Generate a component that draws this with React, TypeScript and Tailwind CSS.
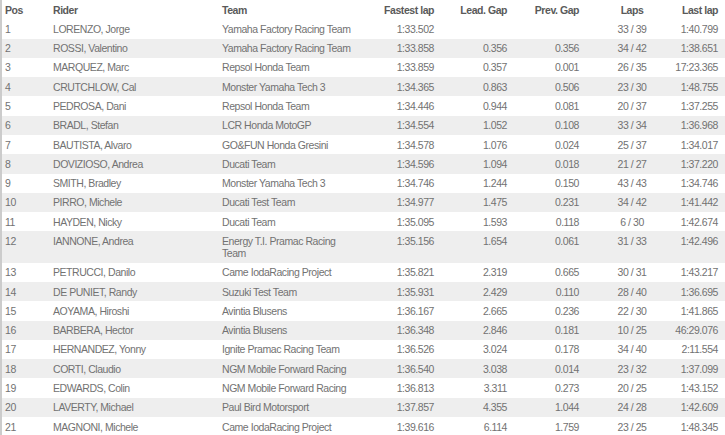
// Standings table: fastest laps per rider
const rows: [string, string, string, string, string, string, string, string][] = [
  ["1", "LORENZO, Jorge", "Yamaha Factory Racing Team", "1:33.502", "", "", "33 / 39", "1:40.799"],
  ["2", "ROSSI, Valentino", "Yamaha Factory Racing Team", "1:33.858", "0.356", "0.356", "34 / 42", "1:38.651"],
  ["3", "MARQUEZ, Marc", "Repsol Honda Team", "1:33.859", "0.357", "0.001", "26 / 35", "17:23.365"],
  ["4", "CRUTCHLOW, Cal", "Monster Yamaha Tech 3", "1:34.365", "0.863", "0.506", "23 / 30", "1:48.755"],
  ["5", "PEDROSA, Dani", "Repsol Honda Team", "1:34.446", "0.944", "0.081", "20 / 37", "1:37.255"],
  ["6", "BRADL, Stefan", "LCR Honda MotoGP", "1:34.554", "1.052", "0.108", "33 / 34", "1:36.968"],
  ["7", "BAUTISTA, Alvaro", "GO&FUN Honda Gresini", "1:34.578", "1.076", "0.024", "25 / 37", "1:34.017"],
  ["8", "DOVIZIOSO, Andrea", "Ducati Team", "1:34.596", "1.094", "0.018", "21 / 27", "1:37.220"],
  ["9", "SMITH, Bradley", "Monster Yamaha Tech 3", "1:34.746", "1.244", "0.150", "43 / 43", "1:34.746"],
  ["10", "PIRRO, Michele", "Ducati Test Team", "1:34.977", "1.475", "0.231", "34 / 42", "1:41.442"],
  ["11", "HAYDEN, Nicky", "Ducati Team", "1:35.095", "1.593", "0.118", "6 / 30", "1:42.674"],
  ["12", "IANNONE, Andrea", "Energy T.I. Pramac Racing Team", "1:35.156", "1.654", "0.061", "31 / 33", "1:42.496"],
  ["13", "PETRUCCI, Danilo", "Came IodaRacing Project", "1:35.821", "2.319", "0.665", "30 / 31", "1:43.217"],
  ["14", "DE PUNIET, Randy", "Suzuki Test Team", "1:35.931", "2.429", "0.110", "28 / 40", "1:36.695"],
  ["15", "AOYAMA, Hiroshi", "Avintia Blusens", "1:36.167", "2.665", "0.236", "22 / 30", "1:41.865"],
  ["16", "BARBERA, Hector", "Avintia Blusens", "1:36.348", "2.846", "0.181", "10 / 25", "46:29.076"],
  ["17", "HERNANDEZ, Yonny", "Ignite Pramac Racing Team", "1:36.526", "3.024", "0.178", "34 / 40", "2:11.554"],
  ["18", "CORTI, Claudio", "NGM Mobile Forward Racing", "1:36.540", "3.038", "0.014", "23 / 32", "1:37.099"],
  ["19", "EDWARDS, Colin", "NGM Mobile Forward Racing", "1:36.813", "3.311", "0.273", "20 / 25", "1:43.152"],
  ["20", "LAVERTY, Michael", "Paul Bird Motorsport", "1:37.857", "4.355", "1.044", "24 / 28", "1:42.609"],
  ["21", "MAGNONI, Michele", "Came IodaRacing Project", "1:39.616", "6.114", "1.759", "23 / 25", "1:48.345"],
];

const grid = "grid grid-cols-[46px_169px_141px_81px_73px_84px_72px_57px]";
const cell = "py-[3.65px] leading-[12px]";

function Row({ r, shaded }: { r: (typeof rows)[number]; shaded: boolean }) {
  return (
    <div className={`${grid} ${shaded ? "bg-[#eeeeee]" : "bg-white"} text-[#727272]`}>
      <div className={`${cell} pl-[3px]`}>{r[0]}</div>
      <div className={`${cell} pl-[5px]`}>{r[1]}</div>
      <div className={`${cell} pl-[5px]`}>{r[2]}</div>
      <div className={`${cell} pr-[5px] text-right`}>{r[3]}</div>
      <div className={`${cell} pr-[5px] text-right`}>{r[4]}</div>
      <div className={`${cell} pr-[17px] text-right`}>{r[5]}</div>
      <div className={`${cell} text-center`}>{r[6]}</div>
      <div className={`${cell} pr-[7px] flex justify-end whitespace-nowrap`}>{r[7]}</div>
    </div>
  );
}

export default function App() {
  return (
    <div
      className="w-[725px] h-[435px] overflow-hidden bg-white border-l-2 border-[#cccccc] text-[10.5px] tracking-[-0.45px]"
      style={{ fontFamily: '"Liberation Sans", Arial, sans-serif' }}
    >
      <div className={`${grid} text-[#5a5a5a] font-bold`}>
        <div className={`${cell} pl-[3px]`}>Pos</div>
        <div className={`${cell} pl-[5px]`}>Rider</div>
        <div className={`${cell} pl-[5px]`}>Team</div>
        <div className={`${cell} pr-[5px] text-right`}>Fastest lap</div>
        <div className={`${cell} pr-[5px] text-right`}>Lead. Gap</div>
        <div className={`${cell} pr-[17px] text-right`}>Prev. Gap</div>
        <div className={`${cell} text-center`}>Laps</div>
        <div className={`${cell} pr-[7px] text-right`}>Last lap</div>
      </div>
      {rows.map((r, i) => (
        <Row key={r[0]} r={r} shaded={i % 2 === 1} />
      ))}
    </div>
  );
}
